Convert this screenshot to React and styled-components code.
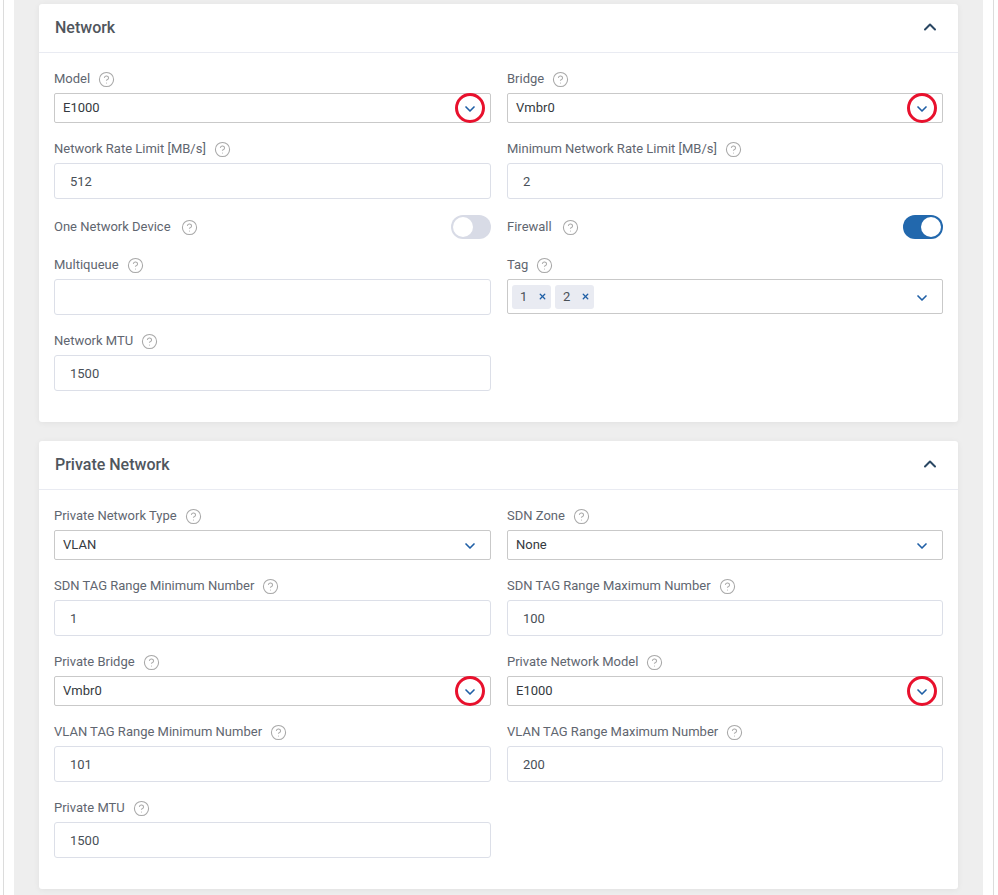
import React from 'react';
import styled, { createGlobalStyle } from 'styled-components';
import { ChevronDown, ChevronUp, CircleHelp, X } from 'lucide-react';

const GlobalStyle = createGlobalStyle`
  html, body {
    margin: 0;
    padding: 0;
    background: #fff;
    height: 895px;
    overflow: hidden;
  }
  * { box-sizing: border-box; }
`;

const Page = styled.div`
  width: 998px;
  height: 895px;
  padding-left: 3px;
  overflow: hidden;
  font-family: Roboto, "Liberation Sans", sans-serif;
`;

const Frame = styled.div`
  width: 991px;
  height: 895px;
  padding: 0 10px;
  background: #fff;
  border-left: 1px solid #dcdcdc;
  border-right: 1px solid #dcdcdc;
`;

const Backdrop = styled.div`
  width: 969px;
  height: 895px;
  padding: 4px 25px 0;
  background: #eeeeee;
  display: flex;
  flex-direction: column;
  gap: 19px;
`;

const Card = styled.section`
  background: #fff;
  border-radius: 3px;
  box-shadow: 0 1px 6px rgba(0, 0, 0, 0.06);
`;

const CardHead = styled.header`
  height: 49px;
  padding: 0 18px 2px 16px;
  display: flex;
  align-items: center;
  justify-content: space-between;
  border-bottom: 1px solid #e9ebf2;
  color: #2a4763;
`;

const Title = styled.h2`
  margin: 0;
  font-size: 16px;
  font-weight: 500;
  color: #50565d;
`;

const Form = styled.div`
  padding: 17px 15px 31px;
  display: grid;
  grid-template-columns: 437px 436px;
  column-gap: 16px;
  row-gap: 17px;
  align-items: start;
`;

const Field = styled.div`
  display: flex;
  flex-direction: column;
  gap: 6px;
`;

const LabelRow = styled.div`
  height: 17px;
  padding-top: 1px;
  display: flex;
  align-items: center;
  gap: 8px;
  font-size: 13px;
  color: #5f6670;
  line-height: 16px;
  svg { color: #a8a8a8; flex: none; }
`;

const Label = ({ children }) => (
  <LabelRow>
    {children}
    <CircleHelp size={17} strokeWidth={1.5} />
  </LabelRow>
);

const TextInput = styled.input`
  display: block;
  width: 100%;
  height: 36px;
  padding: 0 15px;
  border: 1px solid #dcdfe8;
  border-radius: 3px;
  background: #fff;
  outline: none;
  font-family: inherit;
  font-size: 13px;
  color: #495057;
`;

const SelectBox = styled.div`
  position: relative;
  height: ${(p) => (p.$tall ? '35px' : '30px')};
  padding: 0 ${(p) => (p.$tall ? '4px' : '8px')} ${(p) => (p.$tall ? '0' : '2px')};
  display: flex;
  align-items: center;
  gap: 4px;
  border: 1px solid #c9c9c9;
  border-radius: 2px;
  background: #fff;
  font-size: 13px;
  color: #343a40;
`;

const Arrow = styled.span`
  position: absolute;
  right: 11px;
  top: 50%;
  width: 18px;
  height: 18px;
  margin-top: -8px;
  display: flex;
  align-items: center;
  justify-content: center;
  color: #1f5fa6;
`;

const Marker = styled.span`
  position: absolute;
  left: -6px;
  top: -7px;
  width: 30px;
  height: 30px;
  border: 3px solid #e8112d;
  border-radius: 50%;
`;

const SelectArrow = () => <ChevronDown size={16} strokeWidth={2.5} />;

const Select = ({ value, marked }) => (
  <SelectBox>
    {value}
    <Arrow>
      <SelectArrow />
      {marked && <Marker />}
    </Arrow>
  </SelectBox>
);

const Chip = styled.span`
  height: 24px;
  width: 39px;
  padding: 0 4px 0 8px;
  display: flex;
  align-items: center;
  justify-content: space-between;
  background: #e9ebf2;
  border-radius: 3px;
  font-size: 13px;
  color: #495057;
  svg { color: #1f5fa6; }
`;

const SwitchRow = styled.div`
  height: 24px;
  margin-top: -1px;
  display: flex;
  align-items: center;
  justify-content: space-between;
  ${LabelRow} {
    height: 16px;
    padding-top: 0;
    gap: 10px;
  }
`;

const Track = styled.span`
  width: 40px;
  height: 24px;
  padding: 2px;
  display: flex;
  justify-content: ${(p) => (p.$on ? 'flex-end' : 'flex-start')};
  border-radius: 12px;
  background: ${(p) => (p.$on ? '#2268ad' : '#d8dbe6')};
`;

const Knob = styled.span`
  width: 20px;
  height: 20px;
  border-radius: 50%;
  background: #fff;
`;

const Toggle = ({ label, on }) => (
  <SwitchRow>
    <Label>{label}</Label>
    <Track $on={on}>
      <Knob />
    </Track>
  </SwitchRow>
);

const InputField = ({ label, value }) => (
  <Field>
    <Label>{label}</Label>
    <TextInput readOnly value={value} />
  </Field>
);

const SelectField = ({ label, value, marked }) => (
  <Field>
    <Label>{label}</Label>
    <Select value={value} marked={marked} />
  </Field>
);

const Panel = ({ title, children }) => (
  <Card>
    <CardHead>
      <Title>{title}</Title>
      <ChevronUp size={20} strokeWidth={2.4} />
    </CardHead>
    <Form>{children}</Form>
  </Card>
);

const App = () => (
  <Page>
    <GlobalStyle />
    <Frame>
      <Backdrop>
        <Panel title="Network">
          <SelectField label="Model" value="E1000" marked />
          <SelectField label="Bridge" value="Vmbr0" marked />
          <InputField label="Network Rate Limit [MB/s]" value="512" />
          <InputField label="Minimum Network Rate Limit [MB/s]" value="2" />
          <Toggle label="One Network Device" />
          <Toggle label="Firewall" on />
          <InputField label="Multiqueue" value="" />
          <Field>
            <Label>Tag</Label>
            <SelectBox $tall>
              <Chip>1<X size={9} strokeWidth={3.5} /></Chip>
              <Chip>2<X size={9} strokeWidth={3.5} /></Chip>
              <Arrow>
                <SelectArrow />
              </Arrow>
            </SelectBox>
          </Field>
          <InputField label="Network MTU" value="1500" />
        </Panel>
        <Panel title="Private Network">
          <SelectField label="Private Network Type" value="VLAN" />
          <SelectField label="SDN Zone" value="None" />
          <InputField label="SDN TAG Range Minimum Number" value="1" />
          <InputField label="SDN TAG Range Maximum Number" value="100" />
          <SelectField label="Private Bridge" value="Vmbr0" marked />
          <SelectField label="Private Network Model" value="E1000" marked />
          <InputField label="VLAN TAG Range Minimum Number" value="101" />
          <InputField label="VLAN TAG Range Maximum Number" value="200" />
          <InputField label="Private MTU" value="1500" />
        </Panel>
      </Backdrop>
    </Frame>
  </Page>
);

export default App;
